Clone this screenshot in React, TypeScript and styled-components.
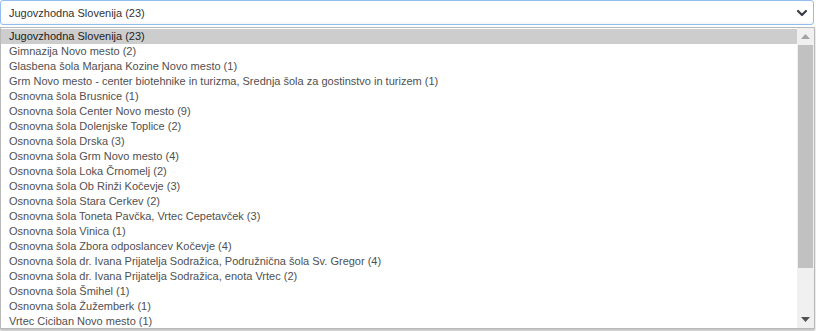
import React from "react";
import styled, { createGlobalStyle } from "styled-components";

const Global = createGlobalStyle`
  html, body { margin: 0; padding: 0; background: #ffffff; }
  body { font-family: "Liberation Sans", Arial, sans-serif; }
`;

const Page = styled.div`
  width: 816px;
  height: 331px;
  display: flex;
  flex-direction: column;
  gap: 2px;
  overflow: hidden;
`;

const SelectBox = styled.div`
  box-sizing: border-box;
  width: 814px;
  height: 25px;
  border: 1px solid #93bdf0;
  border-radius: 3px;
  box-shadow: inset 0 -3px 4px -3px rgba(0, 0, 0, 0.08);
  display: flex;
  align-items: center;
  justify-content: space-between;
  padding: 0 5px 0 8px;
  font-size: 11px;
  color: #333;
`;

const Chevron = styled.svg`
  width: 12px;
  height: 12px;
  display: block;
`;

const Dropdown = styled.div`
  box-sizing: border-box;
  width: 815px;
  height: 302px;
  border: 1px solid #b9b9b9;
  box-shadow: 0 2px 2px rgba(0, 0, 0, 0.25);
  display: flex;
  background: #fff;
`;

const List = styled.div`
  flex: 1;
  display: flex;
  flex-direction: column;
  padding-top: 1px;
`;

const Option = styled.div<{ $active?: boolean }>`
  height: 15px;
  line-height: 15px;
  padding-left: 8px;
  font-size: 11px;
  white-space: nowrap;
  color: ${(p) => (p.$active ? "#222" : "#505050")};
  background: ${(p) => (p.$active ? "#cdcdcd" : "transparent")};
`;

const Scrollbar = styled.div`
  width: 17px;
  background: #f0f0f0;
  display: flex;
  flex-direction: column;
  align-items: stretch;
`;

const ArrowBtn = styled.div`
  height: 17px;
  display: flex;
  align-items: center;
  justify-content: center;
`;

const Track = styled.div`
  flex: 1;
  display: flex;
  flex-direction: column;
  padding: 0 1px;
`;

const Thumb = styled.div`
  height: 223px;
  background: #c1c1c1;
`;

const items = [
  "Jugovzhodna Slovenija (23)",
  "Gimnazija Novo mesto (2)",
  "Glasbena šola Marjana Kozine Novo mesto (1)",
  "Grm Novo mesto - center biotehnike in turizma, Srednja šola za gostinstvo in turizem (1)",
  "Osnovna šola Brusnice (1)",
  "Osnovna šola Center Novo mesto (9)",
  "Osnovna šola Dolenjske Toplice (2)",
  "Osnovna šola Drska (3)",
  "Osnovna šola Grm Novo mesto (4)",
  "Osnovna šola Loka Črnomelj (2)",
  "Osnovna šola Ob Rinži Kočevje (3)",
  "Osnovna šola Stara Cerkev (2)",
  "Osnovna šola Toneta Pavčka, Vrtec Cepetavček (3)",
  "Osnovna šola Vinica (1)",
  "Osnovna šola Zbora odposlancev Kočevje (4)",
  "Osnovna šola dr. Ivana Prijatelja Sodražica, Podružnična šola Sv. Gregor (4)",
  "Osnovna šola dr. Ivana Prijatelja Sodražica, enota Vrtec (2)",
  "Osnovna šola Šmihel (1)",
  "Osnovna šola Žužemberk (1)",
  "Vrtec Ciciban Novo mesto (1)",
];

export default function App() {
  return (
    <>
      <Global />
      <Page>
        <SelectBox>
          <span>Jugovzhodna Slovenija (23)</span>
          <Chevron viewBox="0 0 12 12">
            <path d="M2 4 L6 8 L10 4" fill="none" stroke="#3b3f45" strokeWidth="2.2" strokeLinecap="round" strokeLinejoin="round" />
          </Chevron>
        </SelectBox>
        <Dropdown>
          <List>
            {items.map((t, i) => (
              <Option key={i} $active={i === 0}>
                {t}
              </Option>
            ))}
          </List>
          <Scrollbar>
            <ArrowBtn>
              <svg width="9" height="5" viewBox="0 0 9 5">
                <path d="M0 5 L4.5 0 L9 5 Z" fill="#a3a3a3" />
              </svg>
            </ArrowBtn>
            <Track>
              <Thumb />
            </Track>
            <ArrowBtn>
              <svg width="9" height="5" viewBox="0 0 9 5">
                <path d="M0 0 L9 0 L4.5 5 Z" fill="#505050" />
              </svg>
            </ArrowBtn>
          </Scrollbar>
        </Dropdown>
      </Page>
    </>
  );
}
